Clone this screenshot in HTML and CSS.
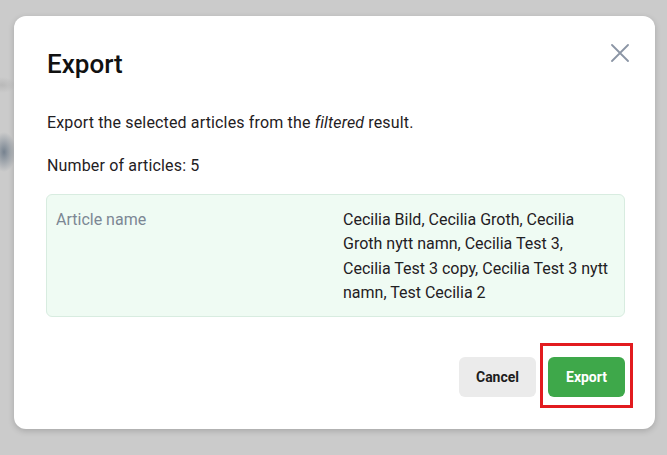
FILE: index.html
```html
<!DOCTYPE html>
<html lang="en">
  <head>
    <meta charset="UTF-8" />
    <meta name="viewport" content="width=device-width, initial-scale=1.0" />
    <title>Export</title>
    <link rel="stylesheet" href="styles.css">
  </head>
  <body>
    <div class="backdrop">
      <div class="modal">
        <div class="modal-header">
          <h2 class="modal-title">Export</h2>
          <button class="close" aria-label="Close">
            <svg width="18" height="18" viewBox="0 0 18 18">
              <path d="M1 1 L17 17 M17 1 L1 17" stroke="#8b95a5" stroke-width="1.8" stroke-linecap="round" />
            </svg>
          </button>
        </div>

        <p class="text">Export the selected articles from the <em>filtered</em> result.</p>
        <p class="text count">Number of articles: 5</p>

        <div class="summary">
          <div class="summary-label">Article name</div>
          <div class="summary-value">Cecilia Bild, Cecilia Groth, Cecilia Groth nytt namn, Cecilia Test 3, Cecilia Test 3 copy, Cecilia Test 3 nytt namn, Test Cecilia 2</div>
        </div>

        <div class="actions">
          <button class="btn btn-cancel">Cancel</button>
          <span class="marked">
            <button class="btn btn-export">Export</button>
          </span>
        </div>
      </div>
    </div>
  </body>
</html>
```

FILE: styles.css
```css
* {
  box-sizing: border-box;
}
body {
  margin: 0;
  background: #cbcbcb;
  font-family: Roboto, "Liberation Sans", sans-serif;
  color: #1f2023;
}
/* dimmed page behind the dialog */
.backdrop {
  padding: 16px 12px 26px 14px;
  height: 455px;
  background:
    radial-gradient(ellipse 12px 20px at 4px 152px, #76828f, rgba(118, 130, 143, 0)),
    radial-gradient(ellipse 14px 8px at 2px 85px, #b9b9b9, rgba(185, 185, 185, 0)),
    #cbcbcb;
}
.modal {
  background: #fff;
  border-radius: 12px;
  height: 413px;
  padding: 0 30px 0 32px;
  box-shadow: 0 2px 6px rgba(0, 0, 0, 0.18);
}
.modal-header {
  display: flex;
  justify-content: space-between;
  align-items: flex-start;
  padding-top: 28px;
}
.modal-title {
  margin: 5px 0 0 1px;
  font-size: 26px;
  font-weight: 500;
  line-height: 30px;
  color: #111;
}
.close {
  margin: 0 -4px 0 0;
  padding: 0;
  border: none;
  background: none;
  width: 18px;
  height: 18px;
}
.text {
  margin: 0 0 0 1px;
  font-size: 16px;
  line-height: 24px;
  letter-spacing: 0.15px;
}
.modal-header + .text {
  margin-top: 32px;
}
.count {
  margin-top: 19px;
}
.summary {
  margin-top: 16px;
  display: grid;
  grid-template-columns: 1fr 1fr;
  column-gap: 16px;
  padding: 13px 10px 10px 9px;
  background: #effbf3;
  border: 1px solid #d8ece0;
  border-radius: 6px;
  font-size: 16px;
  line-height: 24.4px;
}
.summary-label {
  color: #7c8794;
}
.actions {
  display: flex;
  justify-content: flex-end;
  gap: 12px;
  margin-top: 40px;
}
.btn {
  width: 77px;
  height: 40px;
  border: none;
  border-radius: 6px;
  font-family: Roboto, "Liberation Sans", sans-serif;
  font-size: 14px;
  font-weight: 700;
}
.btn-cancel {
  background: #ebebeb;
  color: #1d1d1d;
}
.btn-export {
  background: #3ea84a;
  color: #fff;
}
/* red frame drawn around the export button */
.marked {
  position: relative;
  display: flex;
}
.marked::after {
  content: "";
  position: absolute;
  top: -14px;
  left: -8px;
  right: -8px;
  bottom: -11px;
  border: 3px solid #e21b1f;
}
```
